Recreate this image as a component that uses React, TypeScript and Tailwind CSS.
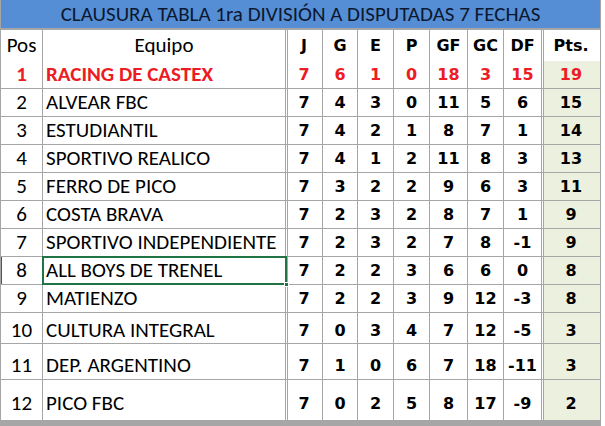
import React from 'react';

type Row = {
  pos: number;
  team: string;
  j: number;
  g: number;
  e: number;
  p: number;
  gf: number;
  gc: number;
  df: number;
  pts: number;
};

const rows: Row[] = [
  { pos: 1, team: 'RACING DE CASTEX', j: 7, g: 6, e: 1, p: 0, gf: 18, gc: 3, df: 15, pts: 19 },
  { pos: 2, team: 'ALVEAR FBC', j: 7, g: 4, e: 3, p: 0, gf: 11, gc: 5, df: 6, pts: 15 },
  { pos: 3, team: 'ESTUDIANTIL', j: 7, g: 4, e: 2, p: 1, gf: 8, gc: 7, df: 1, pts: 14 },
  { pos: 4, team: 'SPORTIVO REALICO', j: 7, g: 4, e: 1, p: 2, gf: 11, gc: 8, df: 3, pts: 13 },
  { pos: 5, team: 'FERRO DE PICO', j: 7, g: 3, e: 2, p: 2, gf: 9, gc: 6, df: 3, pts: 11 },
  { pos: 6, team: 'COSTA BRAVA', j: 7, g: 2, e: 3, p: 2, gf: 8, gc: 7, df: 1, pts: 9 },
  { pos: 7, team: 'SPORTIVO INDEPENDIENTE', j: 7, g: 2, e: 3, p: 2, gf: 7, gc: 8, df: -1, pts: 9 },
  { pos: 8, team: 'ALL BOYS DE TRENEL', j: 7, g: 2, e: 2, p: 3, gf: 6, gc: 6, df: 0, pts: 8 },
  { pos: 9, team: 'MATIENZO', j: 7, g: 2, e: 2, p: 3, gf: 9, gc: 12, df: -3, pts: 8 },
  { pos: 10, team: 'CULTURA INTEGRAL', j: 7, g: 0, e: 3, p: 4, gf: 7, gc: 12, df: -5, pts: 3 },
  { pos: 11, team: 'DEP. ARGENTINO', j: 7, g: 1, e: 0, p: 6, gf: 7, gc: 18, df: -11, pts: 3 },
  { pos: 12, team: 'PICO FBC', j: 7, g: 0, e: 2, p: 5, gf: 8, gc: 17, df: -9, pts: 2 },
];

// row heights follow the sheet: the last three rows are taller
const rowClass = (pos: number): string => {
  if (pos === 10) return 'h-[30px] pt-[6px]';
  if (pos === 11) return 'h-[35px] pt-[9px]';
  if (pos === 12) return 'h-[40px] pt-[8px]';
  return 'h-[27px] pt-px';
};

const grid = 'grid grid-cols-[41px_242px_36px_34px_35px_35px_37px_35px_37px_58px] gap-px';
const calibri = "font-['Carlito','Lato',sans-serif]";
const tahoma = "font-['DejaVu_Sans',sans-serif] font-bold";
const doubleLine = 'shadow-[inset_1px_0_0_#ffffff,inset_2px_0_0_#a6a6a6]';

export default function App() {
  return (
    <div className="w-[605px] h-[426px] bg-white overflow-hidden">
      <div className="w-[601px] bg-[#a6a6a6] px-px pb-[6px] flex flex-col gap-px">
        <div
          className={`h-[28px] bg-[#558ed5] flex items-center justify-center pt-px text-[21px] text-[#0c1830] ${calibri}`}
        >
          CLAUSURA TABLA 1ra DIVISIÓN A DISPUTADAS 7 FECHAS
        </div>

        <div className={`${grid} mt-px h-[29px] text-[21px]`}>
          <div className={`bg-white flex items-center justify-center ${calibri}`}>Pos</div>
          <div className={`bg-white flex items-center justify-center ${calibri}`}>Equipo</div>
          {['J', 'G', 'E', 'P', 'GF', 'GC', 'DF'].map((h, i) => (
            <div
              key={h}
              className={`bg-white flex items-center justify-center text-[16px] ${tahoma} ${i === 0 ? doubleLine : ''}`}
            >
              {h}
            </div>
          ))}
          <div className={`bg-white flex items-center justify-center text-[16px] ${tahoma} ${doubleLine}`}>
            Pts.
          </div>
        </div>

        {rows.map((r) => {
          const first = r.pos === 1;
          const color = first ? 'text-[#ec1c24]' : 'text-black';
          const stats = [r.j, r.g, r.e, r.p, r.gf, r.gc, r.df];
          return (
            <div key={r.pos} className={`${grid} ${first ? 'mt-px' : ''}`}>
              <div
                className={`bg-white flex items-center justify-center text-[21px] ${calibri} ${color} ${rowClass(r.pos)} ${
                  first ? 'font-bold' : ''
                } ${r.pos === 8 ? 'shadow-[inset_1px_0_0_#217346]' : ''}`}
              >
                {r.pos}
              </div>
              <div
                className={`relative bg-white flex items-center pl-[3px] text-[21px] whitespace-nowrap ${calibri} ${color} ${rowClass(
                  r.pos
                )} ${first ? 'font-bold' : ''}`}
              >
                {r.team}
                {r.pos === 8 && (
                  <>
                    <div className="absolute -left-px -top-px -right-[2px] -bottom-px border-2 border-[#217346]" />
                    <div className="absolute -right-[4px] -bottom-[3px] w-[5px] h-[5px] bg-[#217346] border border-white" />
                  </>
                )}
              </div>
              {stats.map((v, i) => (
                <div
                  key={i}
                  className={`bg-white flex items-center justify-center text-[16px] ${tahoma} ${color} ${rowClass(
                    r.pos
                  )} ${i === 0 ? doubleLine : ''}`}
                >
                  {v}
                </div>
              ))}
              <div
                className={`bg-[#ebf0df] flex items-center justify-center text-[16px] ${tahoma} ${color} ${rowClass(
                  r.pos
                )} ${doubleLine}`}
              >
                {r.pts}
              </div>
            </div>
          );
        })}
      </div>
    </div>
  );
}
